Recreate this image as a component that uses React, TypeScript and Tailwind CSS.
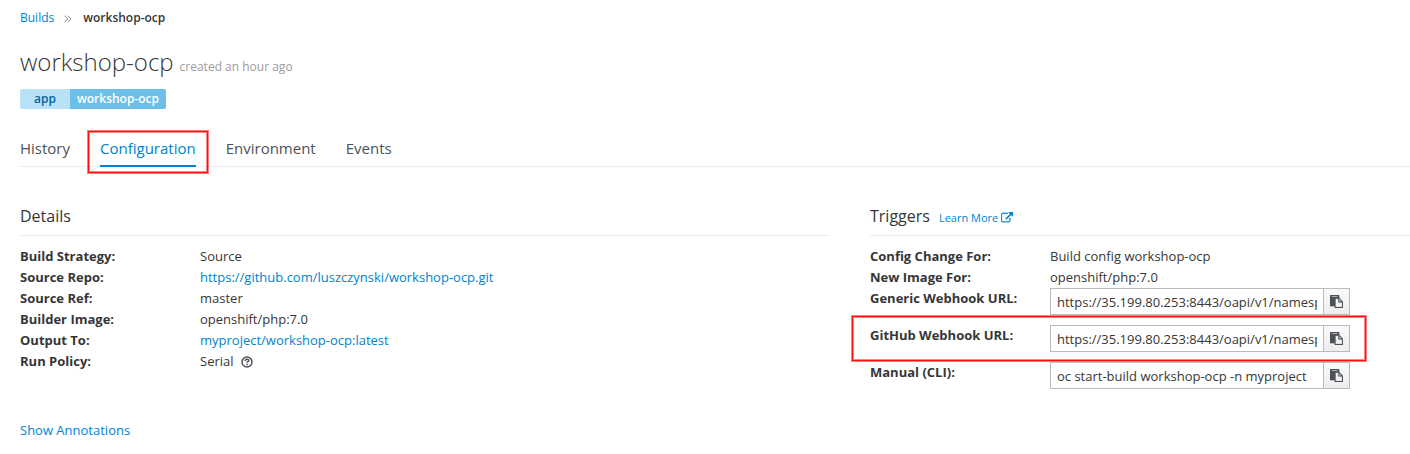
import React from "react";

const link = "text-[#0083d0]";

function PasteIcon() {
  return (
    <svg viewBox="0 0 1792 1792" className="h-[13px] w-[13px]" fill="#4d5258" stroke="#4d5258" strokeWidth="30">
      <path d="M768 1664h896v-640h-416q-40 0-68-28t-28-68v-416h-384v1152zm256-1440v-64q0-13-9.5-22.5t-22.5-9.5h-704q-13 0-22.5 9.5t-9.5 22.5v64q0 13 9.5 22.5t22.5 9.5h704q13 0 22.5-9.5t9.500-22.500zm256 672h299l-299-299v299zm512 128v672q0 40-28 68t-68 28h-960q-40 0-68-28t-28-68v-160h-544q-40 0-68-28t-28-68v-1344q0-40 28-68t68-28h1088q40 0 68 28t28 68v328q21 13 36 28l408 408q28 28 48 76t20 88z" />
    </svg>
  );
}

function ExternalIcon() {
  return (
    <svg viewBox="0 0 1792 1792" className="h-[12px] w-[12px]" fill="currentColor" stroke="currentColor" strokeWidth="50">
      <path d="M1408 928v320q0 119-84.500 203.500t-203.500 84.500h-832q-119 0-203.500-84.500t-84.500-203.500v-832q0-119 84.500-203.500t203.500-84.500h704q14 0 23 9t9 23v64q0 14-9 23t-23 9h-704q-66 0-113 47t-47 113v832q0 66 47 113t113 47h832q66 0 113-47t47-113v-320q0-14 9-23t23-9h64q14 0 23 9t9 23zm384-864v512q0 26-19 45t-45 19-45-19l-176-176-652 652q-10 10-23 10t-23-10l-114-114q-10-10-10-23t10-23l652-652-176-176q-19-19-19-45t19-45 45-19h512q26 0 45 19t19 45z" />
    </svg>
  );
}

function HelpIcon() {
  return (
    <svg viewBox="0 0 12 12" className="h-3 w-3" fill="none" stroke="#4d5258">
      <circle cx="6" cy="6" r="5" strokeWidth="1.5" />
      <path d="M4.200 4.900c0-1 .7-1.600 1.800-1.600s1.800.5 1.800 1.300c0 1.100-1.700 1.100-1.700 2.200" strokeWidth="1.500" />
      <path d="M5.300 8.400h1.500" strokeWidth="1.500" />
    </svg>
  );
}

function Row({ label, children }: { label: string; children: React.ReactNode }) {
  return (
    <div className="flex">
      <dt className="w-[180px] font-bold">{label}</dt>
      <dd className="flex items-center">{children}</dd>
    </div>
  );
}

function CopyField({ value }: { value: string }) {
  return (
    <div className="mb-[10px] flex h-[27px] w-[300px] border border-[#bbb]">
      <div className="flex-1 px-[6px]">
        <input
          readOnly
          value={value}
          className="block h-[25px] w-full bg-transparent p-0 pt-px leading-[24px] outline-none"
        />
      </div>
      <button className="flex w-[26px] shrink-0 items-center justify-center border-l border-[#bbb] bg-linear-to-b from-[#fafafa] to-[#ededed]">
        <PasteIcon />
      </button>
    </div>
  );
}

export default function App() {
  const url = "https://35.199.80.253:8443/oapi/v1/namespaces/myproject";
  return (
    <div className="relative h-[454px] w-[1410px] overflow-hidden bg-white pl-5 font-['Open_Sans',sans-serif] text-[13px] leading-[21px] text-[#363636]">
      <nav className="flex h-[20px] items-center pt-[15px] text-[12px] leading-5">
        <a className={link}>Builds</a>
        <svg viewBox="0 0 8 8" className="ml-[10px] mr-[11px] mt-[2px] h-2 w-2" fill="none" stroke="#8c8c8c">
          <path d="M.5.700l3.200 3.300-3.200 3.300M3.700.700l3.200 3.300-3.200 3.300" />
        </svg>
        <span className="font-semibold">workshop-ocp</span>
      </nav>
      <h1 className="mt-[25px] flex h-[36px] items-baseline gap-[6px]">
        <span className="text-[24px] font-light leading-[34px]">workshop-ocp</span>
        <small className="text-[12px] text-[#9c9c9c]">created an hour ago</small>
      </h1>
      <div className="mt-[8px] flex h-5 text-[12px] font-semibold leading-5">
        <span className="w-[50px] rounded-l-[2px] bg-[#b9e1f7] text-center text-[#00659c]">app</span>
        <span className="w-[96px] rounded-r-[2px] bg-[#6cbfe9] text-center text-white">workshop-ocp</span>
      </div>
      <div className="mt-[22px] flex h-[36px] gap-[30px] border-b border-[#ededed] text-[15px] leading-[34px] text-[#4d5258]">
        <span>History</span>
        <span className="h-[36px] border-b-2 border-[#0083d0] text-[#0083d0]">Configuration</span>
        <span>Environment</span>
        <span>Events</span>
      </div>
      <div className="flex gap-10">
        <section className="w-[810px]">
          <h2 className="mb-[10px] mt-[39px] h-[30px] border-b border-[#ededed] text-[16px] leading-[20px]">Details</h2>
          <dl>
            <Row label="Build Strategy:">Source</Row>
            <Row label="Source Repo:"><a className={link}>https://github.com/luszczynski/workshop-ocp.git</a></Row>
            <Row label="Source Ref:">master</Row>
            <Row label="Builder Image:">openshift/php:7.0</Row>
            <Row label="Output To:"><a className={link}>myproject/workshop-ocp:latest</a></Row>
            <Row label="Run Policy:"><span className="mr-[7.5px]">Serial</span><HelpIcon /></Row>
          </dl>
          <a className={`mt-[48px] block ${link}`}>Show Annotations</a>
        </section>
        <section className="w-[540px]">
          <h2 className="mb-[10px] mt-[39px] flex h-[30px] items-baseline gap-[9px] border-b border-[#ededed] text-[16px] leading-[20px]">
            Triggers
            <a className={`flex items-center gap-[3px] text-[11px] ${link}`}>Learn More <ExternalIcon /></a>
          </h2>
          <dl>
            <Row label="Config Change For:">Build config workshop-ocp</Row>
            <Row label="New Image For:">openshift/php:7.0</Row>
            <Row label="Generic Webhook URL:"><CopyField value={url} /></Row>
            <Row label="GitHub Webhook URL:"><CopyField value={url} /></Row>
            <Row label="Manual (CLI):"><CopyField value="oc start-build workshop-ocp -n myproject" /></Row>
          </dl>
        </section>
      </div>
      <div className="absolute left-[88px] top-[131px] h-[42px] w-[120px] border border-[#ff0d0d] shadow-[0_0_0_1px_rgba(255,20,20,0.55),inset_0_0_0_1px_rgba(255,20,20,0.5)]" />
      <div className="absolute left-[852px] top-[316px] h-[45px] w-[514px] border border-[#ff0d0d] shadow-[0_0_0_1px_rgba(255,20,20,0.55),inset_0_0_0_1px_rgba(255,20,20,0.5)]" />
    </div>
  );
}
